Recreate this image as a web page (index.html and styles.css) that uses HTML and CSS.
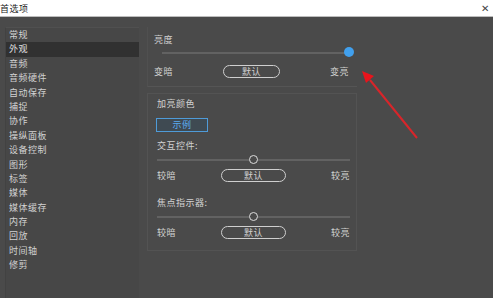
FILE: index.html
```html
<!DOCTYPE html>
<html lang="zh-CN">
<head>
    <meta charset="UTF-8">
    <meta name="viewport" content="width=device-width, initial-scale=1.0">
    <title>首选项</title>
    <link rel="stylesheet" href="styles.css">
</head>
<body>
    <div class="titlebar">
        <span class="title">首选项</span>
        <span class="close">✕</span>
    </div>

    <div class="main">
        <ul class="sidebar">
            <li>常规</li>
            <li class="active">外观</li>
            <li>音频</li>
            <li>音频硬件</li>
            <li>自动保存</li>
            <li>捕捉</li>
            <li>协作</li>
            <li>操纵面板</li>
            <li>设备控制</li>
            <li>图形</li>
            <li>标签</li>
            <li>媒体</li>
            <li>媒体缓存</li>
            <li>内存</li>
            <li>回放</li>
            <li>时间轴</li>
            <li>修剪</li>
        </ul>

        <div class="content">
            <div class="group brightness">
                <div class="label">亮度</div>
                <div class="slider">
                    <div class="track"></div>
                    <div class="knob blue" style="left: 100%"></div>
                </div>
                <div class="range-row">
                    <span>变暗</span>
                    <button class="pill">默认</button>
                    <span>变亮</span>
                </div>
            </div>

            <div class="group boxed">
                <div class="label">加亮颜色</div>
                <button class="sample">示例</button>

                <div class="label">交互控件:</div>
                <div class="slider">
                    <div class="track"></div>
                    <div class="knob" style="left: 50%"></div>
                </div>
                <div class="range-row">
                    <span>较暗</span>
                    <button class="pill wide">默认</button>
                    <span>较亮</span>
                </div>

                <div class="label">焦点指示器:</div>
                <div class="slider">
                    <div class="track"></div>
                    <div class="knob" style="left: 50%"></div>
                </div>
                <div class="range-row">
                    <span>较暗</span>
                    <button class="pill wide">默认</button>
                    <span>较亮</span>
                </div>
            </div>
        </div>
    </div>

    <!-- red annotation arrow -->
    <svg class="arrow" width="493" height="298" viewBox="0 0 493 298">
        <line x1="417" y1="138" x2="370" y2="80" stroke="#d8252a" stroke-width="2"/>
        <polygon points="362,71 374,76 366,83" fill="#e8141c"/>
    </svg>
</body>
</html>
```

FILE: styles.css
```css
* {
    box-sizing: border-box;
}
body {
    margin: 0;
    width: 493px;
    height: 298px;
    overflow: hidden;
    background: #4a4a4a;
    font-family: "Noto Sans CJK SC", "Noto Sans", sans-serif;
    font-size: 9px;
    letter-spacing: 0.5px;
    color: #d2d2d2;
    position: relative;
}
.titlebar {
    height: 17px;
    background: #ffffff;
    border-bottom: 1px solid #bdbdbd;
    display: flex;
    justify-content: space-between;
    align-items: center;
    color: #222;
}
.title {
    margin-left: 0;
    font-size: 9px;
}
.close {
    margin-right: 3px;
    font-size: 10px;
    color: #444;
    font-family: "DejaVu Sans", sans-serif;
}
.main {
    display: flex;
    padding-top: 10px;
    height: 281px;
}
.sidebar {
    list-style: none;
    margin: 0 0 0 5px;
    padding: 0;
    width: 134px;
    background: #474747;
    border-top: 1px solid #505050;
    border-left: 1px solid #424242;
}
.sidebar li {
    height: 14.4px;
    line-height: 14.4px;
    padding-left: 3px;
}
.sidebar li.active {
    background: #313131;
    color: #e0e0e0;
}
.content {
    margin-left: 7px;
    width: 211px;
}
.group {
    padding: 5px 8px 0 10px;
}
.brightness {
    height: 60px;
    padding: 6px 8px 0 6px;
    border-bottom: 1px solid #555;
    border-left: 1px solid #505050;
    margin-left: 1px;
}
.label {
    height: 14px;
    line-height: 14px;
}
.slider {
    position: relative;
    height: 10px;
    margin: 1px 0 7px 8px;
}
.track {
    position: absolute;
    left: 0;
    right: 0;
    top: 4px;
    height: 2px;
    background: #626262;
}
.knob {
    position: absolute;
    top: 0;
    width: 9px;
    height: 9px;
    margin-left: -5px;
    border-radius: 50%;
    border: 1.5px solid #dcdcdc;
    background: #4a4a4a;
}
.knob.blue {
    width: 10px;
    height: 10px;
    top: -1px;
    border: none;
    background: #41a0ee;
}
.range-row {
    display: flex;
    justify-content: space-between;
    align-items: center;
    height: 13px;
}
.pill {
    width: 57px;
    height: 13px;
    padding: 0;
    border: 1px solid #cfcfcf;
    border-radius: 7px;
    background: transparent;
    color: #d2d2d2;
    font-family: inherit;
    font-size: 9px;
    letter-spacing: 0.5px;
    line-height: 11px;
}
.pill.wide {
    width: 65px;
}
.boxed {
    margin: 6px 0 0 1px;
    height: 158px;
    padding: 3px 6px 0 9px;
    border: 1px solid #535353;
}
.boxed .slider {
    margin-left: 0;
    margin-top: 2px;
    margin-bottom: 4px;
}
.boxed .range-row + .label {
    margin-top: 14px;
}
.sample {
    display: block;
    width: 52px;
    height: 14px;
    margin: 7px 0 7px -1px;
    padding: 0;
    border: 1px solid #4f9bd8;
    background: #3f4a52;
    color: #5aaaf0;
    font-family: inherit;
    font-size: 9px;
    letter-spacing: 0.5px;
    line-height: 12px;
}
.arrow {
    position: absolute;
    left: 0;
    top: 0;
    pointer-events: none;
}
```
